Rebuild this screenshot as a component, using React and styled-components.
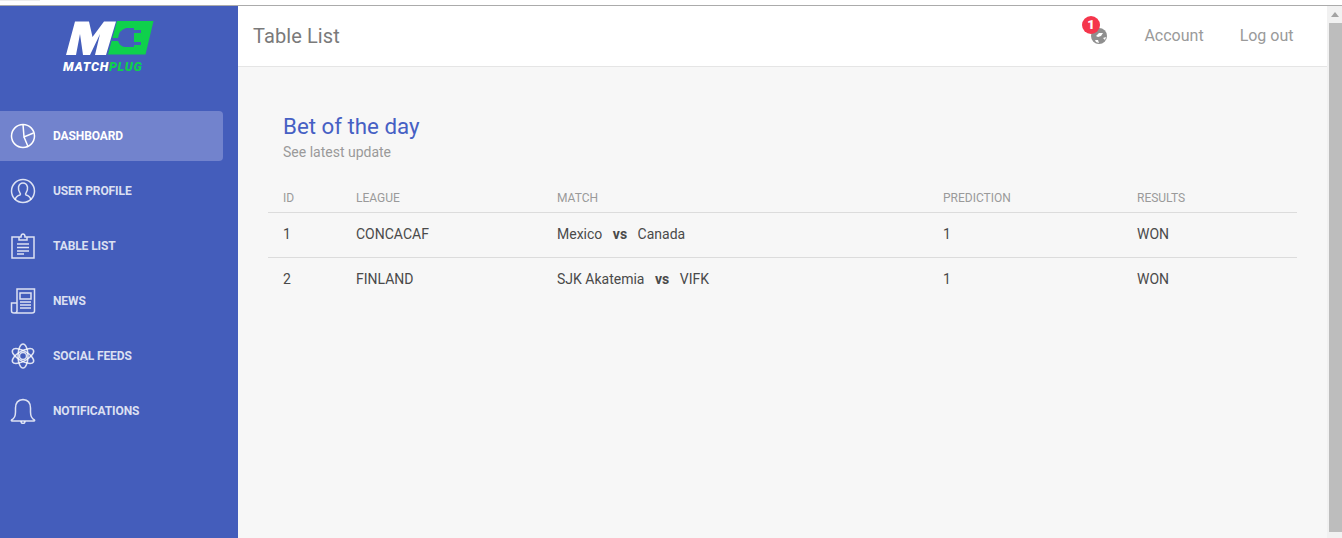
import React from "react";
import styled, { createGlobalStyle } from "styled-components";

const GlobalStyle = createGlobalStyle`
  html, body {
    margin: 0;
    height: 100%;
    overflow: hidden;
    background: #fff;
    font-family: Roboto, "Liberation Sans", sans-serif;
  }
`;

const Page = styled.div`
  display: flex;
  flex-direction: column;
  height: 538px;
`;
const BrowserEdge = styled.div`
  height: 5px;
  flex: none;
  background: #fff;
  border-bottom: 1px solid #ababab;
  div {
    width: 40px;
    height: 1px;
    background: #ececec;
  }
`;
const Body = styled.div`
  display: flex;
  flex: 1;
  min-height: 0;
`;

const Sidebar = styled.aside`
  width: 238px;
  flex: none;
  background: #445dbb;
`;
const Brand = styled.div`
  height: 105px;
  padding: 15px 0 0 63px;
  box-sizing: border-box;
  svg {
    display: block;
    margin-left: 3px;
  }
`;
const BrandName = styled.div`
  width: 82px;
  margin-top: 5px;
  font-size: 12.5px;
  line-height: 11px;
  font-weight: 900;
  font-style: italic;
  letter-spacing: 0.75px;
  color: #fff;
  white-space: nowrap;
  span {
    color: #0fd04c;
  }
`;
const Nav = styled.nav`
  display: flex;
  flex-direction: column;
  gap: 5px;
  width: 223px;
`;
const NavItem = styled.a`
  display: flex;
  align-items: center;
  height: 50px;
  padding-left: 10px;
  border-radius: 0 4px 4px 0;
  font-size: 12px;
  font-weight: 700;
  letter-spacing: -0.1px;
  text-transform: uppercase;
  color: ${(props) => (props.$active ? "#fff" : "rgba(255,255,255,0.82)")};
  background: ${(props) => (props.$active ? "#7283cd" : "transparent")};
  svg {
    width: 26px;
    height: 26px;
    flex: none;
    margin-right: 17px;
    fill: none;
    stroke: currentColor;
    stroke-width: 1.5;
  }
`;

const Main = styled.main`
  flex: 1;
  min-width: 0;
  display: flex;
  flex-direction: column;
  background: #f7f7f7;
`;
const Navbar = styled.header`
  height: 61px;
  flex: none;
  box-sizing: border-box;
  display: flex;
  align-items: center;
  padding: 0 33.5px 1px 15px;
  background: #fff;
  border-bottom: 1px solid #e5e5e5;
`;
const PageTitle = styled.div`
  flex: 1;
  font-size: 20px;
  letter-spacing: 0.1px;
  color: #7a7a7a;
`;
const GlobeButton = styled.div`
  position: relative;
  width: 16px;
  height: 16px;
  margin-right: 37.5px;
  svg {
    display: block;
  }
`;
const Badge = styled.span`
  position: absolute;
  left: -9px;
  top: -11.5px;
  width: 18px;
  height: 18px;
  border-radius: 50%;
  background: #f5364c;
  color: #fff;
  font-size: 13px;
  font-weight: 900;
  line-height: 18px;
  text-align: center;
`;
const NavLink = styled.a`
  font-size: 16px;
  color: #9a9a9a;
  & + & {
    margin-left: 36px;
  }
`;

const Content = styled.div`
  padding: 46px 30px 0;
`;
const CardHead = styled.div`
  padding: 0 15px 23px;
`;
const CardTitle = styled.h4`
  margin: 0;
  font-size: 22.3px;
  line-height: 27px;
  font-weight: 400;
  color: #4660c4;
`;
const CardSub = styled.p`
  margin: 4px 0 0;
  font-size: 14px;
  line-height: 17px;
  color: #9a9a9a;
`;
const Table = styled.table`
  width: 100%;
  border-collapse: collapse;
  table-layout: fixed;
  font-size: 14px;
  color: #4a4a4a;
`;
const Th = styled.th`
  width: ${(props) => props.$w};
  height: 28px;
  padding: 0 0 0 15px;
  box-sizing: border-box;
  text-align: left;
  font-size: 12px;
  font-weight: 400;
  color: #9a9a9a;
  border-bottom: 1px solid #dcdcdc;
`;
const Td = styled.td`
  height: 45px;
  padding: 0 0 2px 15px;
  box-sizing: border-box;
  tr + tr & {
    border-top: 1px solid #dcdcdc;
  }
  b {
    margin: 0 10.5px;
    font-weight: 700;
  }
`;

const Scrollbar = styled.div`
  width: 15px;
  flex: none;
  display: flex;
  flex-direction: column;
  align-items: flex-end;
  background: #f1f1f1;
  i {
    width: 0;
    height: 0;
    margin: 6px 3px 0 0;
    border-left: 4px solid transparent;
    border-right: 4px solid transparent;
    border-bottom: 5px solid #a3a3a3;
  }
`;
const ScrollThumb = styled.div`
  width: 13px;
  height: 509px;
  margin-top: 6px;
  background: #bdbdbd;
`;

const Logo = () => (
  <svg width="88" height="35" viewBox="0 0 88 35">
    <path fill="#fff" d="M0 34 L9 .5 H23 L26.500 16 L38 .5 H50 L40 34 H29 L34 13 L24 34 H17 L14 13 L10 34Z" />
    <path fill="#0fd04c" d="M51 0 H87.500 L79.500 33.500 H42Z" />
    <path fill="#445dbb" d="M46 17 H52 Q53 9 60 7 H68 V9 H75 V12 H68 V21 H75 V24 H68 V26 H60 Q54 26 52 20 H46Z" />
  </svg>
);

const PieIcon = () => (
  <svg viewBox="0 0 26 26">
    <circle cx="13" cy="13" r="11.500" />
    <path d="M13 1.500 L14 14 L23.500 10 M14 14 L18 23.500" />
  </svg>
);
const UserIcon = () => (
  <svg viewBox="0 0 26 26">
    <circle cx="13" cy="13" r="11.500" />
    <path d="M5 22 Q6 18 10 17 Q11 16 10 15 Q8 12 8.500 9 Q9.500 5 13 5 Q16.500 5 17.500 9 Q18 12 16 15 Q15 16 16 17 Q20 18 21 22" />
  </svg>
);
const ClipboardIcon = () => (
  <svg viewBox="0 0 26 26">
    <path d="M9 4 H2 V25 H24 V4 H17 M9 7 V4 H11 Q11 1 13 1 Q15 1 15 4 H17 V7Z" />
    <path d="M7 11 H19 M7 14.500 H19 M7 18 H19 M7 21 H14" />
  </svg>
);
const NewsIcon = () => (
  <svg viewBox="0 0 26 26">
    <path d="M7 20 V1 H24.500 V23 Q24.500 25 22 25 H4 Q1.500 25 1.500 23 V15 H7 V23 Q7 25 4 25" />
    <path d="M10 5 H21 V11 H10Z M10 14 H21 M10 17 H21 M10 20 H21" />
  </svg>
);
const AtomIcon = () => (
  <svg viewBox="0 0 26 26">
    <circle cx="13" cy="13" r="3.500" />
    <ellipse cx="13" cy="13" rx="5" ry="12" />
    <ellipse cx="13" cy="13" rx="5" ry="12" transform="rotate(60 13 13)" />
    <ellipse cx="13" cy="13" rx="5" ry="12" transform="rotate(120 13 13)" />
  </svg>
);
const BellIcon = () => (
  <svg viewBox="0 0 26 26">
    <path d="M1.500 22 Q5.500 20 5.500 14 V10 Q5.500 2 13 1.500 Q20.500 2 20.500 10 V14 Q20.500 20 24.500 22 Q25 23 24 23 H2 Q1 23 1.500 22Z" />
    <path d="M11 23 Q11 25.500 13 25.500 Q15 25.500 15 23" />
  </svg>
);

const Globe = () => (
  <svg width="16" height="16" viewBox="0 0 16 16">
    <circle cx="8" cy="8" r="8" fill="#8f8f8f" />
    <path fill="#fff" d="M5 8 L8 5 L12 5 L10 8 L7 9Z M4 12 L7 12 L8 15 L5 14Z M12 10 L15 9 L14 12Z" />
  </svg>
);

const links = [
  { label: "Dashboard", Icon: PieIcon, active: true },
  { label: "User Profile", Icon: UserIcon },
  { label: "Table List", Icon: ClipboardIcon },
  { label: "News", Icon: NewsIcon },
  { label: "Social Feeds", Icon: AtomIcon },
  { label: "Notifications", Icon: BellIcon },
];

const rows = [
  { id: 1, league: "CONCACAF", home: "Mexico", away: "Canada", prediction: 1, result: "WON" },
  { id: 2, league: "FINLAND", home: "SJK Akatemia", away: "VIFK", prediction: 1, result: "WON" },
];

export default function App() {
  return (
    <Page>
      <GlobalStyle />
      <BrowserEdge>
        <div />
      </BrowserEdge>
      <Body>
        <Sidebar>
          <Brand>
            <Logo />
            <BrandName>
              MATCH<span>PLUG</span>
            </BrandName>
          </Brand>
          <Nav>
            {links.map(({ label, Icon, active }) => (
              <NavItem key={label} $active={active}>
                <Icon />
                {label}
              </NavItem>
            ))}
          </Nav>
        </Sidebar>
        <Main>
          <Navbar>
            <PageTitle>Table List</PageTitle>
            <GlobeButton>
              <Globe />
              <Badge>1</Badge>
            </GlobeButton>
            <NavLink>Account</NavLink>
            <NavLink>Log out</NavLink>
          </Navbar>
          <Content>
            <CardHead>
              <CardTitle>Bet of the day</CardTitle>
              <CardSub>See latest update</CardSub>
            </CardHead>
            <Table>
              <thead>
                <tr>
                  <Th $w="73px">ID</Th>
                  <Th $w="201px">LEAGUE</Th>
                  <Th $w="386px">MATCH</Th>
                  <Th $w="194px">PREDICTION</Th>
                  <Th>RESULTS</Th>
                </tr>
              </thead>
              <tbody>
                {rows.map((row) => (
                  <tr key={row.id}>
                    <Td>{row.id}</Td>
                    <Td>{row.league}</Td>
                    <Td>
                      {row.home}
                      <b>vs</b>
                      {row.away}
                    </Td>
                    <Td>{row.prediction}</Td>
                    <Td>{row.result}</Td>
                  </tr>
                ))}
              </tbody>
            </Table>
          </Content>
        </Main>
        <Scrollbar>
          <i />
          <ScrollThumb />
        </Scrollbar>
      </Body>
    </Page>
  );
}
